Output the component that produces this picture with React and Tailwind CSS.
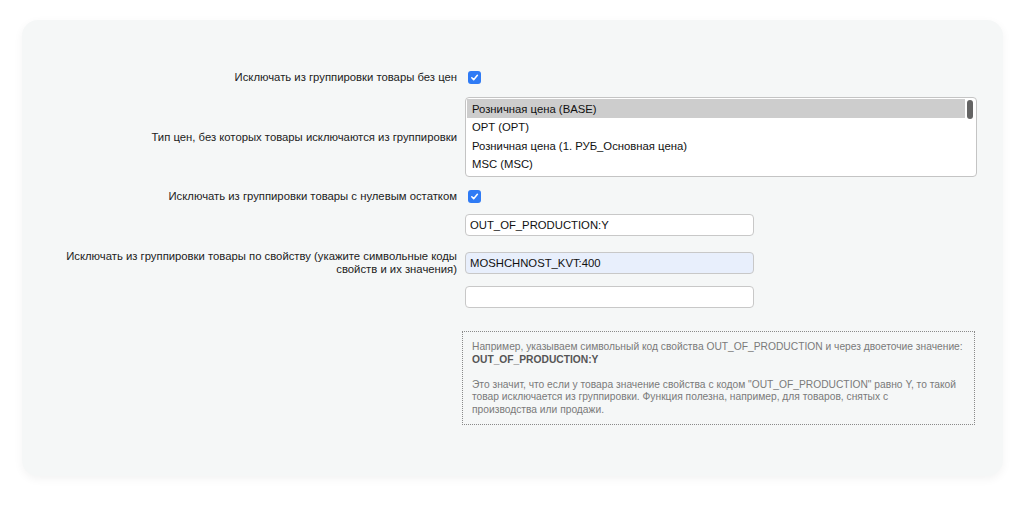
import React from "react";

const font = { fontFamily: '"Liberation Sans", Arial, Helvetica, sans-serif' };

function Check() {
  return (
    <span className="ml-[3px] inline-flex h-[13px] w-[13px] items-center justify-center rounded-[3px] bg-[#2f7bf5]">
      <svg width="9" height="9" viewBox="0 0 10 10" fill="none">
        <path d="M2 5.3 L4.1 7.4 L8.2 2.6" stroke="#fff" strokeWidth="1.7" strokeLinecap="round" strokeLinejoin="round" />
      </svg>
    </span>
  );
}

function Row({ label, children, className = "" }) {
  return (
    <div className={`grid grid-cols-[435px_1fr] items-center gap-x-2 ${className}`}>
      <div className="text-right text-[11.3px] leading-[13px] text-[#222]">{label}</div>
      <div className="flex items-center">{children}</div>
    </div>
  );
}

function TextInput({ value, filled }) {
  return (
    <div
      className={`flex h-[22px] w-[289px] items-center rounded-[4px] border border-[#c8c8c8] px-[4px] text-[11.3px] text-[#111] ${
        filled ? "bg-[#e8effc]" : "bg-white"
      }`}
    >
      {value}
    </div>
  );
}

const prices = [
  "Розничная цена (BASE)",
  "OPT (OPT)",
  "Розничная цена (1. РУБ_Основная цена)",
  "MSC (MSC)",
];

export default function App() {
  return (
    <div className="min-h-[515px] bg-white pl-[22px] pt-[20px]" style={font}>
      <div className="h-[456px] w-[981px] rounded-[16px] bg-[#f5f7f7] pt-[47px] shadow-[0_3px_10px_rgba(0,0,0,0.05)]">
        <Row label="Исключать из группировки товары без цен" className="h-[20px]">
          <Check />
        </Row>

        <Row label="Тип цен, без которых товары исключаются из группировки" className="mt-[10px]">
          <div className="relative h-[80px] w-[512px] rounded-[4px] border border-[#c4c4c4] bg-white p-[1px]">
            {prices.map((p, i) => (
              <div
                key={p}
                className={`flex h-[18.5px] items-center pl-[5px] pt-[2px] text-[11.3px] text-[#111] ${
                  i === 0 ? "mr-[10px] bg-[#cdcdcd]" : ""
                }`}
              >
                {p}
              </div>
            ))}
            <div className="absolute right-[3px] top-[2px] h-[19px] w-[6px] rounded-full bg-[#646464]" />
          </div>
        </Row>

        <Row label="Исключать из группировки товары с нулевым остатком" className="mt-[9px] h-[20px]">
          <Check />
        </Row>

        <Row label="" className="mt-[8px] h-[22px]">
          <TextInput value="OUT_OF_PRODUCTION:Y" />
        </Row>

        <Row
          label={
            <>
              Исключать из группировки товары по свойству (укажите символьные коды
              <br />
              свойств и их значения)
            </>
          }
          className="mt-[14px] h-[22px]"
        >
          <TextInput value="MOSHCHNOST_KVT:400" filled />
        </Row>

        <Row label="" className="mt-[14px] h-[22px]">
          <TextInput value="" />
        </Row>

        <div className="mt-[23px] grid grid-cols-[435px_1fr] gap-x-2">
          <div />
          <div className="-ml-[3px] h-[94px] w-[513px] border border-dotted border-[#8a8a8a] px-[9px] pt-[9px] text-[10.25px] leading-[12.5px] text-[#7a7a7a]">
            <div className="whitespace-nowrap">
              Например, указываем символьный код свойства OUT_OF_PRODUCTION и через двоеточие значение:
            </div>
            <div className="font-bold text-[#555]">OUT_OF_PRODUCTION:Y</div>
            <div className="mt-[12.5px] whitespace-nowrap">
              Это значит, что если у товара значение свойства с кодом "OUT_OF_PRODUCTION" равно Y, то такой
              <br />
              товар исключается из группировки. Функция полезна, например, для товаров, снятых с
              <br />
              производства или продажи.
            </div>
          </div>
        </div>
      </div>
    </div>
  );
}
